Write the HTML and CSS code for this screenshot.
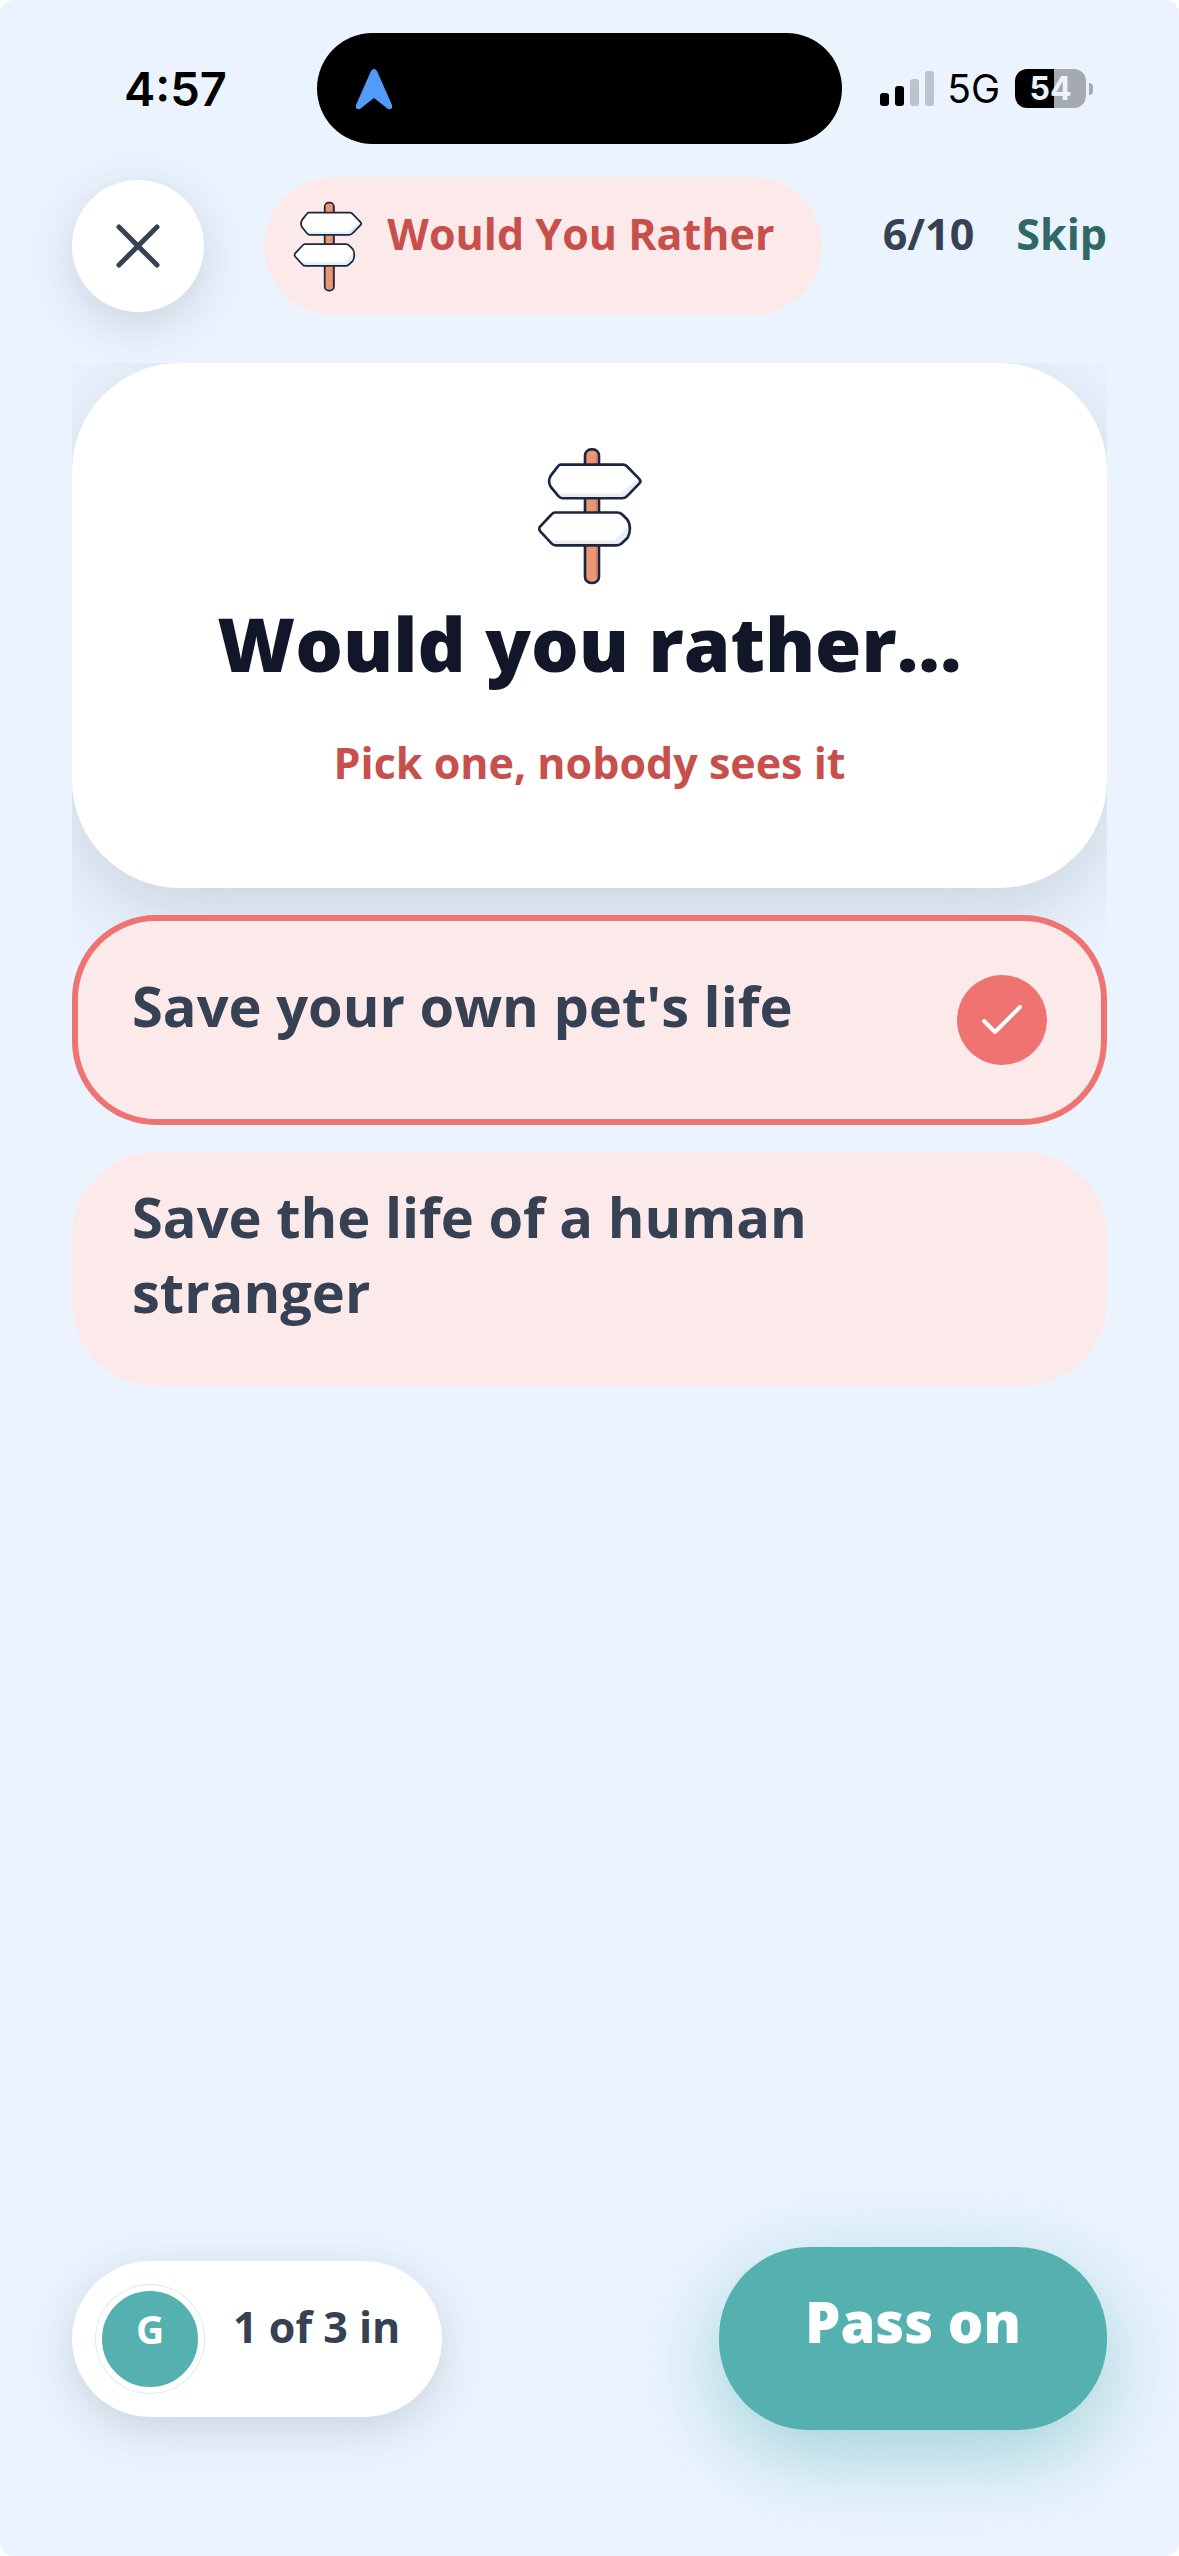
FILE: index.html
```html
<!DOCTYPE html>
<html lang="en">
<head>
    <meta charset="UTF-8">
    <meta name="viewport" content="width=device-width, initial-scale=1.0">
    <title>Would You Rather</title>
    <link rel="stylesheet" href="styles.css">
</head>
<body>
    <!-- Shared icons -->
    <svg class="sprite" aria-hidden="true">
        <symbol id="signpost" viewBox="52 50 318 415">
            <rect x="196" y="57" width="42" height="402" rx="19" fill="#ed9674" stroke="#1b2740" stroke-width="8"/>
            <path d="M231 70V440" stroke="#d97e62" stroke-width="5"/>
            <path d="M122 103H310Q317 103 322 108L359 146Q366 153 359 160L324 196Q317 204 308 204H128Q121 204 116 198L93 170Q83 153 93 136L114 109Q118 103 122 103Z" fill="#fff"/>
            <path d="M118 190H302L356 146Q366 153 359 160L324 196Q317 204 308 204H128Z" fill="#e6edf4"/>
            <path d="M122 103H310Q317 103 322 108L359 146Q366 153 359 160L324 196Q317 204 308 204H128Q121 204 116 198L93 170Q83 153 93 136L114 109Q118 103 122 103Z" fill="none" stroke="#1b2740" stroke-width="8"/>
            <path d="M106 247H293Q302 247 308 253L323 268Q331 279 331 296Q331 312 324 323L306 340Q300 346 291 346H108Q101 346 95 340L61 303Q56 296 61 289L95 253Q100 247 106 247Z" fill="#fff"/>
            <path d="M90 331H286L328 285Q334 310 324 323L306 340Q300 346 291 346H108Z" fill="#e6edf4"/>
            <path d="M106 247H293Q302 247 308 253L323 268Q331 279 331 296Q331 312 324 323L306 340Q300 346 291 346H108Q101 346 95 340L61 303Q56 296 61 289L95 253Q100 247 106 247Z" fill="none" stroke="#1b2740" stroke-width="8"/>
        </symbol>
        <symbol id="tick" viewBox="0 0 90 90">
            <path d="M27 46L38 57L63 32" fill="none" stroke="#fff" stroke-width="4" stroke-linecap="round" stroke-linejoin="round"/>
        </symbol>
    </svg>

    <div class="screen">
        <div class="status-bar">
            <span class="time">4:57</span>
            <div class="island">
                <svg width="40" height="42" viewBox="0 0 40 42"><path d="M17 3Q20 -1 23 3L38 37Q39 42 34 41L20 30L6 41Q1 42 2 37Z" fill="#529bfa"/></svg>
            </div>
            <div class="status-right">
                <svg width="54" height="36" viewBox="0 0 54 36">
                    <rect x="0" y="22" width="9" height="13" rx="3"/>
                    <rect x="15" y="15" width="9" height="20" rx="3"/>
                    <rect x="30" y="8" width="9" height="27" rx="3" fill="#bcc3cc"/>
                    <rect x="45" y="0" width="9" height="35" rx="3" fill="#bcc3cc"/>
                </svg>
                <span class="network">5G</span>
                <span class="battery">54</span>
            </div>
        </div>

        <header class="header">
            <button class="close" aria-label="Close">
                <svg width="48" height="48" viewBox="0 0 48 48"><path d="M5 5L43 43M43 5L5 43" stroke="#364153" stroke-width="5" stroke-linecap="round"/></svg>
            </button>
            <div class="game-pill">
                <svg class="pill-icon"><use href="#signpost"/></svg>
                <span class="label">Would You Rather</span>
            </div>
            <div class="header-right">
                <span class="label">6/10</span>
                <button class="skip label">Skip</button>
            </div>
        </header>

        <main class="content">
            <section class="card">
                <svg class="card-icon"><use href="#signpost"/></svg>
                <h1>Would you rather...</h1>
                <p>Pick one, nobody sees it</p>
            </section>

            <label class="option">
                <input type="radio" name="choice" checked>
                <span class="option-text">Save your own pet's life</span>
                <svg class="check"><use href="#tick"/></svg>
            </label>
            <label class="option">
                <input type="radio" name="choice">
                <span class="option-text">Save the life of a human stranger</span>
                <svg class="check"><use href="#tick"/></svg>
            </label>
        </main>

        <footer class="footer">
            <div class="players">
                <span class="avatar">G</span>
                <span class="label">1 of 3 in</span>
            </div>
            <button class="pass">Pass on</button>
        </footer>
    </div>
</body>
</html>
```
FILE: styles.css
```css
* {
    box-sizing: border-box;
}

body {
    margin: 0;
    background: #fff;
    color: #364153;
    font-family: "Open Sans", "Noto Sans", sans-serif;
    font-weight: 700;
}

button {
    border: none;
    background: none;
    padding: 0;
    color: inherit;
    font: inherit;
    cursor: pointer;
}

svg {
    display: block;
    flex: none;
}

.sprite {
    position: absolute;
    width: 0;
    height: 0;
}

.screen {
    display: flex;
    flex-direction: column;
    min-height: 100vh;
    background: #ebf4fe;
    border-radius: 14px;
}

/* Status bar */
.status-bar {
    display: flex;
    align-items: center;
    padding: 33px 93px 0 124px;
    color: #000;
    font-family: Inter, sans-serif;
}

.time {
    font-size: 47px;
    font-weight: 600;
}

.island {
    flex: 1;
    display: flex;
    align-items: center;
    height: 111px;
    margin: 0 38px 0 90px;
    padding-left: 37px;
    border-radius: 56px;
    background: #000;
}

.status-right {
    display: flex;
    align-items: center;
}

.network {
    margin: 0 15px 0 13px;
    font-size: 39px;
    font-weight: 400;
}

.battery {
    position: relative;
    width: 71px;
    border-radius: 12px;
    background: linear-gradient(90deg, #000 55%, #a5a9b1 55%);
    color: #ebf4fe;
    font-size: 32px;
    font-weight: 700;
    line-height: 39px;
    text-align: center;
}

.battery::after {
    content: "";
    position: absolute;
    right: -7px;
    top: 14px;
    width: 4px;
    height: 12px;
    border-radius: 0 6px 6px 0;
    background: #a5a9b1;
}

/* Header */
.header {
    display: flex;
    align-items: center;
    justify-content: space-between;
    padding: 33px 72px 0;
}

.label {
    padding-bottom: 24px;
    font-size: 43px;
    line-height: 60px;
    white-space: nowrap;
}

.close {
    display: flex;
    align-items: center;
    justify-content: center;
    width: 132px;
    height: 132px;
    border-radius: 50%;
    background: #fff;
    box-shadow: 0 12px 48px rgba(45, 55, 72, 0.18);
}

.game-pill {
    display: flex;
    align-items: center;
    gap: 24px;
    height: 138px;
    padding: 0 48px 0 29px;
    border-radius: 69px;
    background: #fce9e9;
    color: #c7504c;
}

.pill-icon {
    width: 70px;
    height: 91px;
}

.header-right {
    display: flex;
    gap: 42px;
}

.skip {
    padding-bottom: 24px;
    color: #2f6865;
}

/* Question and answers */
.content {
    flex: 1;
    display: flex;
    flex-direction: column;
    gap: 27px;
    margin: 48px 72px 0;
    overflow: hidden;
}

.card {
    display: flex;
    flex-direction: column;
    align-items: center;
    padding: 84px 60px 95px;
    border-radius: 108px;
    background: #fff;
    box-shadow: 0 24px 84px rgba(45, 55, 72, 0.18);
    text-align: center;
}

.card-icon {
    width: 106px;
    height: 138px;
}

.card h1 {
    margin: 16px 0 48px;
    color: #111728;
    font-size: 75px;
    font-weight: 800;
    line-height: 84px;
}

.card p {
    margin: 0;
    color: #c7504c;
    font-size: 43px;
    line-height: 60px;
}

.option {
    position: relative;
    display: flex;
    align-items: center;
    justify-content: space-between;
    gap: 36px;
    min-height: 210px;
    padding: 21px 54px;
    border: 6px solid #fce9e9;
    border-radius: 84px;
    background: #fce9e9;
    cursor: pointer;
}

.option:has(input:checked) {
    border-color: #ef7471;
}

.option input {
    position: absolute;
    opacity: 0;
}

.option-text {
    padding-bottom: 30px;
    font-size: 56px;
    line-height: 75px;
}

.check {
    width: 90px;
    height: 90px;
    border-radius: 50%;
    background: #ef7471;
    visibility: hidden;
}

input:checked ~ .check {
    visibility: visible;
}

/* Bottom bar */
.footer {
    display: flex;
    align-items: center;
    justify-content: space-between;
    padding: 0 72px 126px;
}

.players {
    display: flex;
    align-items: center;
    gap: 29px;
    padding: 24px 42px 24px 24px;
    border-radius: 78px;
    background: #fff;
    box-shadow: 0 12px 48px rgba(45, 55, 72, 0.18);
}

.avatar {
    width: 108px;
    height: 108px;
    border: 6px solid #fff;
    border-radius: 50%;
    background: #54b1b0;
    box-shadow: 0 0 0 1px #d3eeeb;
    color: #fff;
    font-size: 39px;
    line-height: 76px;
    text-align: center;
}

.pass {
    height: 183px;
    padding: 0 86px 36px;
    border-radius: 90px;
    background: #54b1b0;
    box-shadow: 0 24px 84px rgba(84, 177, 176, 0.5);
    color: #fff;
    font-size: 56px;
    font-weight: 800;
}
```
